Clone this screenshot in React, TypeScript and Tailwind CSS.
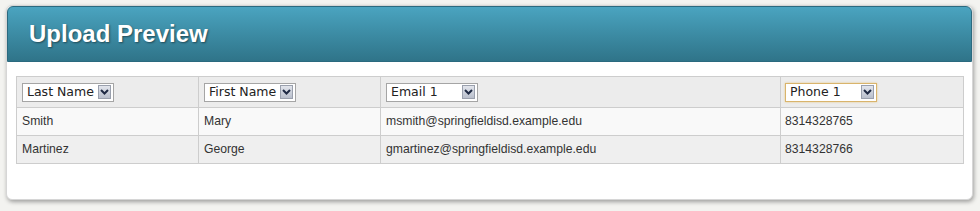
import React from 'react';

type Row = { last: string; first: string; email: string; phone: string };

const rows: Row[] = [
  { last: 'Smith', first: 'Mary', email: 'msmith@springfieldisd.example.edu', phone: '8314328765' },
  { last: 'Martinez', first: 'George', email: 'gmartinez@springfieldisd.example.edu', phone: '8314328766' },
];

function FakeSelect({ label, focused }: { label: string; focused?: boolean }) {
  return (
    <div
      className={`flex h-[19px] w-[92px] items-center justify-between border bg-white pl-[4px] pr-[2px] ${
        focused ? 'border-[#d9b46c] shadow-[0_0_2px_#e6c98a]' : 'border-[#a5a5a5]'
      }`}
    >
      <span className="text-[12.5px] leading-none text-[#222] [font-family:'DejaVu_Sans',Verdana,sans-serif]">
        {label}
      </span>
      <span className="flex h-[14px] w-[13px] items-center justify-center border border-[#9aa0ad] bg-gradient-to-b from-[#e2e5ec] to-[#b9bfcc]">
        <svg width="9" height="6" viewBox="0 0 9 6">
          <path d="M1 1 L4.5 4.5 L8 1" fill="none" stroke="#1f2a44" strokeWidth="2" />
        </svg>
      </span>
    </div>
  );
}

export default function App() {
  return (
    <div className="h-[211px] w-[980px] bg-[#f3f3f0] pl-[6px] pt-[5px] [font-family:'Liberation_Sans',Arial,sans-serif]">
      <div className="h-[195px] w-[967px] rounded-[6px] border border-[#d6d6d6] bg-white shadow-[1px_2px_4px_rgba(0,0,0,0.35)]">
        {/* header bar */}
        <div className="flex h-[56px] items-center rounded-t-[6px] border border-[#2b6a7f] bg-gradient-to-b from-[#4aa4c0] to-[#2f7489] pl-[21px]">
          <h1 className="text-[24px] font-bold text-white [text-shadow:1px_1px_2px_rgba(0,0,0,0.45)]">
            Upload Preview
          </h1>
        </div>

        <div className="pl-[9px] pr-[8px] pt-[14px]">
          <table className="w-[947px] table-fixed border-collapse text-[12.2px] text-[#333]">
            <colgroup>
              <col className="w-[182px]" />
              <col className="w-[182px]" />
              <col className="w-[400px]" />
              <col className="w-[183px]" />
            </colgroup>
            <thead>
              <tr className="h-[31px] bg-[#ececec]">
                <th className="border border-[#cdcdcd] px-[5px] text-left font-normal">
                  <FakeSelect label="Last Name" />
                </th>
                <th className="border border-[#cdcdcd] px-[5px] text-left font-normal">
                  <FakeSelect label="First Name" />
                </th>
                <th className="border border-[#cdcdcd] px-[5px] text-left font-normal">
                  <FakeSelect label="Email 1" />
                </th>
                <th className="border border-[#cdcdcd] px-[4px] text-left font-normal">
                  <FakeSelect label="Phone 1" focused />
                </th>
              </tr>
            </thead>
            <tbody>
              {rows.map((r, i) => (
                <tr key={r.email} className={`h-[28px] ${i === 0 ? 'bg-[#f9f9f9]' : 'bg-[#efefef]'}`}>
                  <td className="border border-[#cdcdcd] px-[5px]">{r.last}</td>
                  <td className="border border-[#cdcdcd] px-[5px]">{r.first}</td>
                  <td className="border border-[#cdcdcd] px-[5px]">{r.email}</td>
                  <td className="border border-[#cdcdcd] px-[4px]">{r.phone}</td>
                </tr>
              ))}
            </tbody>
          </table>
        </div>
      </div>
    </div>
  );
}
